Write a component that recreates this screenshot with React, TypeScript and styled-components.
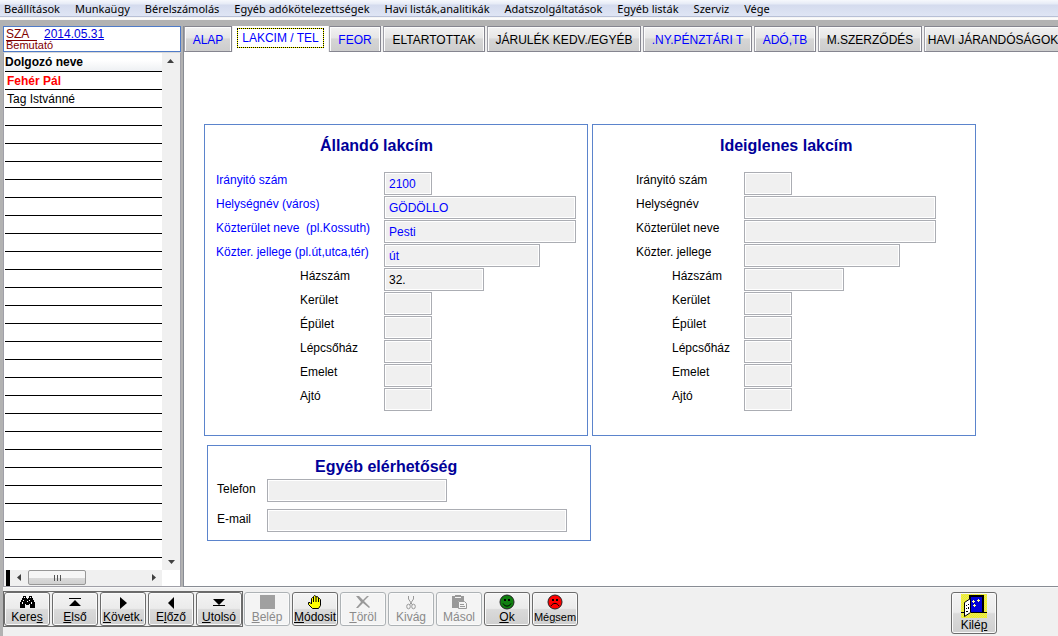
import React from 'react';
import styled, { createGlobalStyle, css } from 'styled-components';

const GlobalStyle = createGlobalStyle`
  *, *::before, *::after { box-sizing: border-box; }
  body {
    margin: 0;
    background: #f0f0f0;
    color: #000;
    font: 12px/16px "Liberation Sans", Arial, sans-serif;
    overflow-x: hidden;
  }
  button, input { font: inherit; color: inherit; margin: 0; }
`;

const Window = styled.div`
  display: flex;
  flex-direction: column;
  min-height: 100vh;
  border-left: 3px solid #b2b2b2;
`;

const MenuBar = styled.nav`
  display: flex;
  gap: 15px;
  height: 20px;
  margin-left: -3px;
  padding: 0 4px 3px;
  background: linear-gradient(#f6f8fc 0, #e6ebf6 4px, #d4dbee 5px, #dfe5f4 16px, #b8c0d6 16px, #b8c0d6 17px, #f0f0f0 17px, #fff 19px, #f0f0f0 20px);
`;

const MenuItem = styled.button`
  border: 0;
  padding: 0;
  background: none;
  font: 11px/16px "Noto Sans", "Open Sans", sans-serif;
  white-space: nowrap;
`;

const Workspace = styled.div`
  display: flex;
  gap: 2px;
  padding-top: 6px;
  background: #b2b2b2;
  border-bottom: 1px solid #f8f8f8;
`;

const Sidebar = styled.aside`
  flex: none;
  width: 178px;
  display: flex;
  flex-direction: column;
  background: #f0f0f0;
`;

const Company = styled.header`
  height: 26px;
  padding: 0 2px;
  border: 1px solid #4f7bc8;
  background: #fff;
  color: #800000;
`;

const CompanyLine = styled.div`
  display: flex;
  gap: 7px;
  line-height: 14px;
`;

const CompanyCode = styled.span`
  width: 31px;
  border-bottom: 1px solid #800000;
  height: 14px;
`;

const DateLink = styled.a`
  color: #0000e0;
`;

const CompanyName = styled.div`
  font-size: 11px;
  line-height: 9px;
`;

const ListBox = styled.div`
  flex: 1;
  display: grid;
  grid-template-columns: 158px 1fr;
  grid-template-rows: 1fr 16px;
  border: 1px solid #a0a0a8;
  border-top-color: #d8d8d8;
  background: #fff;
`;

const ListArea = styled.div`
  padding: 0 0 12px 1px;
`;

const WorkerTable = styled.table`
  width: 100%;
  border-collapse: collapse;
  th, td {
    height: 18px;
    padding: 1px 2px 0;
    text-align: left;
    line-height: 16px;
    border-bottom: 1px solid #000;
  }
  th { background: linear-gradient(#fff 40%, #eef0f3); padding: 0; }
`;

const Cell = styled.td<{ $active?: boolean }>`
  ${p => p.$active && css`color: #f00; font-weight: bold;`}
`;

const VScroll = styled.div`
  display: flex;
  flex-direction: column;
  justify-content: space-between;
  background: #f0f0f0;
`;

const HScroll = styled.div`
  display: flex;
  align-items: center;
  background: #f0f0f0;
`;

const Marker = styled.span`
  width: 4px;
  height: 16px;
  margin: 0 1px 0 2px;
  background: #000;
`;

const ScrollButton = styled.button`
  width: 17px;
  height: 16px;
  padding: 0;
  border: 0;
  background: none;
  display: grid;
  place-items: center;
  &:last-child { margin-left: auto; }
`;

const Thumb = styled.div`
  width: 58px;
  height: 15px;
  display: flex;
  justify-content: center;
  align-items: center;
  gap: 2px;
  border: 1px solid #979797;
  border-radius: 2px;
  background: linear-gradient(#f6f6f6 50%, #dadada 50%, #d0d0d0);
  i { width: 1px; height: 6px; background: #555; }
`;

const Main = styled.main`
  flex: 1;
  min-width: 0;
  display: flex;
  flex-direction: column;
  border-left: 1px solid #888c94;
  border-bottom: 1px solid #888c94;
  background: #fff;
`;

const Tabs = styled.div`
  display: flex;
  height: 26px;
  gap: 2px;
  overflow: hidden;
  background: #f0f0f0;
`;

const Tab = styled.button<{ $w: number; $blue?: boolean; $selected?: boolean }>`
  flex: none;
  width: ${p => p.$w}px;
  padding: 1px 0 0;
  white-space: nowrap;
  border: 1px solid #85858f;
  border-left-color: #a0a0a8;
  background: linear-gradient(#f2f2f2, #e6e6e6 45%, #d6d6d6 50%, #cdcdcd);
  box-shadow: inset 1px 1px #fcfcfc, inset -1px 0 #fcfcfc;
  color: ${p => (p.$blue ? '#0000ff' : '#000')};
  ${p => p.$selected && css`
    padding: 2px 4px 4px;
    border: 0;
    margin: 0 -1px;
    background: #fff;
    box-shadow: none;
  `}
`;

const Focus = styled.span`
  display: block;
  height: 20px;
  line-height: 18px;
  border: 1px dotted #000;
  background: linear-gradient(#fff, #fff) padding-box, linear-gradient(#ffff00, #ffff00) border-box;
`;

const Page = styled.div`
  flex: 1;
  padding: 72px 20px 40px;
`;

const Panels = styled.div`
  display: flex;
  flex-wrap: wrap;
  gap: 4px;
`;

const Panel = styled.form<{ $pad: number }>`
  width: 384px;
  max-width: 100%;
  padding: 10px 11px 9px ${p => p.$pad}px;
  border: 1px solid #5b84cc;
`;

const Contact = styled(Panel)`
  margin: 9px 0 0 3px;
  padding: 10px 9px 7px;
  label { padding-top: 2px; }
`;

const Title = styled.h2<{ $indent: number }>`
  margin: 0;
  padding-left: ${p => p.$indent}px;
  font-size: 16px;
  line-height: 22px;
  color: #000099;
`;

const Fields = styled.div<{ $col: number; $gap: number; $top: number }>`
  display: grid;
  grid-template-columns: ${p => p.$col}px 1fr;
  row-gap: ${p => p.$gap}px;
  padding-top: ${p => p.$top}px;
  padding-bottom: ${p => p.$top}px;
`;

const Label = styled.label<{ $indent?: number; $blue?: boolean }>`
  padding-left: ${p => p.$indent || 0}px;
  color: ${p => (p.$blue ? '#0000ff' : '#000')};
  white-space: pre;
`;

const TextBox = styled.input<{ $w: number; $blue?: boolean }>`
  width: ${p => p.$w}px;
  height: 23px;
  padding: 0 4px;
  border: 1px solid #abadb3;
  border-radius: 0;
  background: #f0f0f0;
  box-shadow: inset 0 0 0 1px #fff;
  color: ${p => (p.$blue ? '#0000ff' : '#000')};
  outline: 0;
`;

const Toolbar = styled.footer`
  flex: 1;
  display: flex;
  align-items: flex-start;
  gap: 2px;
  min-height: 48px;
  padding: 3px 61px 1px 0;
`;

const NavGroup = styled.div`
  display: flex;
  gap: 2px;
  padding: 0 1px;
  outline: 1px solid #6a6a6a;
  outline-offset: -1px;
  margin-right: -1px;
`;

const ToolButton = styled.button<{ $tall?: boolean; $small?: boolean }>`
  flex: none;
  width: 46px;
  height: ${p => (p.$tall ? 42 : 34)}px;
  margin: 1px 0;
  padding: 0;
  display: flex;
  flex-direction: column;
  align-items: center;
  overflow: hidden;
  border: 1px solid #6c6c6c;
  border-radius: 3px;
  background: linear-gradient(#f3f3f3, #ebebeb 48%, #dadada 52%, #cfcfcf);
  box-shadow: inset 0 0 0 1px #fafafa;
  font-size: ${p => (p.$small ? 11 : 12)}px;
  line-height: 14px;
  white-space: nowrap;
  svg { flex: none; margin-top: 1px; }
  &:disabled {
    color: #8a8a8a;
    border-color: #adb2b5;
    background: #f4f4f4;
  }
`;

const ExitSlot = styled.div`
  margin-left: auto;
`;

const Arrow = ({ d }: { d: string }) => (
  <svg width="7" height="7" viewBox="0 0 7 7" aria-hidden="true"><path d={d} fill="#404040" /></svg>
);

const Glyph = ({ children }: { children: React.ReactNode }) => (
  <svg width="18" height="16" viewBox="0 0 18 16" aria-hidden="true">{children}</svg>
);

const Binoculars = () => (
  <Glyph>
    <path fill="#000" d="M5 2h3v2h1v1h1V4h1V2h3v2h1v2h1v2h1v6h-5v-4h-1v1H8v-1H7v4H2V8h1V6h1V4h1z" />
    <path fill="#fff" d="M6 3h1v1H6zM5 6h1v1H5zM4 8h1v2H4zM12 3h1v1h-1zM11 6h1v1h-1zM13 8h1v2h-1zM9 7h1v1H9z" />
  </Glyph>
);
const First = () => <Glyph><path d="M3 4h12v1H3zM9 6l6 6H3z" /></Glyph>;
const Next = () => <Glyph><path d="M6 3l7 6-7 6z" /></Glyph>;
const Prev = () => <Glyph><path d="M12 3L6 9l6 6z" /></Glyph>;
const Last = () => <Glyph><path d="M3 5h12l-6 6zM3 11h12v1H3z" /></Glyph>;
const Square = () => <Glyph><path fill="#a0a0a0" d="M2 1h15v14H2z" /></Glyph>;
const Hand = () => (
  <Glyph>
    <path fill="#ffff00" stroke="#000" strokeLinejoin="round" d="M6.500 14.500L2.500 10.500V8.500H4L5.500 10V4.500L6.500 3.500 7.500 4V2.500L8.500 1.500 10 2.500V3L11 2.500 12.500 3.500V5L13.500 4.500 14.500 5.500V11.500L12.500 14.500z" />
    <path stroke="#000" fill="none" d="M7.500 4v4M10 3v5M12.500 5v3" />
  </Glyph>
);
const Cross = () => (
  <Glyph>
    <path fill="#999" d="M2 2h3l4 4 4-4h2l-5 5 6 6-1 1-6-5-5 5H2l5-6z" />
  </Glyph>
);
const Scissors = () => (
  <Glyph>
    <path fill="none" stroke="#999" d="M6.500 2v3l4 6M11.500 2v3l-4 6" />
    <ellipse cx="6.500" cy="12.500" rx="1.800" ry="2.300" fill="none" stroke="#999" />
    <ellipse cx="11.500" cy="12.500" rx="1.800" ry="2.300" fill="none" stroke="#999" />
  </Glyph>
);
const Clipboard = () => (
  <Glyph>
    <path fill="#999" d="M2 2h3V1h6v1h3v5H8v7H2z" />
    <path fill="#f4f4f4" d="M5 3h6v1H5z" />
    <path fill="#f4f4f4" stroke="#999" d="M8.500 7.500h6l2 2v5h-8z" />
    <path stroke="#999" d="M10 10.500h4M10 12.500h5" />
  </Glyph>
);
const Face = ({ fill, mouth }: { fill: string; mouth: string }) => (
  <Glyph>
    <circle cx="9" cy="8" r="7" fill={fill} stroke="#222" />
    <path d="M6 5h2v2H6zM10 5h2v2h-2z" />
    <path d={mouth} fill="none" stroke="#000" />
  </Glyph>
);
const Door = () => (
  <svg width="26" height="24" viewBox="0 0 26 24" aria-hidden="true">
    <defs>
      <pattern id="dither" width="2" height="2" patternUnits="userSpaceOnUse">
        <path fill="#d8d880" d="M0 0h2v2H0z" />
        <path fill="#ffff00" d="M0 0h1v1H0zM1 1h1v1H1z" />
      </pattern>
    </defs>
    <path fill="url(#dither)" d="M0 0h26v24H0z" />
    <path d="M0 18h4v1H0zM10 18h16v1H10zM8 1h15v18h-2V3H10v3H8z" />
    <path fill="#0000d8" d="M10 3h11v15H10z" />
    <path fill="#fff" stroke="#000" d="M3.500 8.500l6-4v14l-6 4z" />
    <path d="M5 11h1v1H5zM7 10h1v1H7zM5 14h1v1H5zM7 13h1v2H7zM5 17h2v1H5z" />
    <path stroke="#ffffa0" d="M11 7.500h3M12.500 6v3M16 6.500h3M17.500 5v3M12 11.500h3M13.500 10v3" />
  </svg>
);

const menu = ['Beállítások', 'Munkaügy', 'Bérelszámolás', 'Egyéb adókötelezettségek', 'Havi listák,analitikák', 'Adatszolgáltatások', 'Egyéb listák', 'Szerviz', 'Vége'];

const tabs = [
  { text: 'ALAP', w: 48, blue: true },
  { text: 'LAKCIM / TEL', w: 95, blue: true, selected: true },
  { text: 'FEOR', w: 52, blue: true },
  { text: 'ELTARTOTTAK', w: 102 },
  { text: 'JÁRULÉK KEDV./EGYÉB', w: 154 },
  { text: '.NY.PÉNZTÁRI T', w: 109, blue: true },
  { text: 'ADÓ,TB', w: 62, blue: true },
  { text: 'M.SZERZŐDÉS', w: 104 },
  { text: 'HAVI JÁRANDÓSÁGOK', w: 138 },
];

const workers = ['Fehér Pál', 'Tag Istvánné', ...Array<string>(25).fill('')];

type Field = { label: string; w: number; value?: string; blue?: boolean; sub?: boolean };

const details: Field[] = ['Kerület', 'Épület', 'Lépcsőház', 'Emelet', 'Ajtó'].map(label => ({ label, w: 48, sub: true }));

const permanent: Field[] = [
  { label: 'Irányitó szám', w: 48, value: '2100', blue: true },
  { label: 'Helységnév (város)', w: 192, value: 'GÖDÖLLO', blue: true },
  { label: 'Közterület neve  (pl.Kossuth)', w: 192, value: 'Pesti', blue: true },
  { label: 'Közter. jellege (pl.út,utca,tér)', w: 156, value: 'út', blue: true },
  { label: 'Házszám', w: 100, value: '32.', sub: true },
  ...details,
];

const temporary: Field[] = [
  { label: 'Irányitó szám', w: 48 },
  { label: 'Helységnév', w: 192 },
  { label: 'Közterület neve', w: 192 },
  { label: 'Közter. jellege', w: 156 },
  { label: 'Házszám', w: 100, sub: true },
  ...details,
];

const contact: Field[] = [
  { label: 'Telefon', w: 180 },
  { label: 'E-mail', w: 300 },
];

function FieldRows({ id, fields, indent = 0 }: { id: string; fields: Field[]; indent?: number }) {
  return (
    <>
      {fields.map((f, i) => (
        <React.Fragment key={f.label}>
          <Label htmlFor={`${id}-${i}`} $blue={f.blue} $indent={f.sub ? indent : 0}>{f.label}</Label>
          <TextBox id={`${id}-${i}`} $w={f.w} $blue={f.blue} defaultValue={f.value} readOnly />
        </React.Fragment>
      ))}
    </>
  );
}

export default function App() {
  return (
    <>
      <GlobalStyle />
      <Window>
        <MenuBar>
          {menu.map(m => <MenuItem key={m}>{m}</MenuItem>)}
        </MenuBar>
        <Workspace>
          <Sidebar>
            <Company>
              <CompanyLine>
                <CompanyCode>SZA</CompanyCode>
                <DateLink href="#date">2014.05.31</DateLink>
              </CompanyLine>
              <CompanyName>Bemutató</CompanyName>
            </Company>
            <ListBox>
              <ListArea>
                <WorkerTable>
                  <thead><tr><th>Dolgozó neve</th></tr></thead>
                  <tbody>
                    {workers.map((w, i) => <tr key={i}><Cell $active={i === 0}>{w}</Cell></tr>)}
                  </tbody>
                </WorkerTable>
              </ListArea>
              <VScroll>
                <ScrollButton aria-label="Fel"><Arrow d="M0 5l3.500-4L7 5z" /></ScrollButton>
                <ScrollButton aria-label="Le"><Arrow d="M0 2l3.500 4L7 2z" /></ScrollButton>
              </VScroll>
              <HScroll>
                <Marker />
                <ScrollButton aria-label="Balra"><Arrow d="M5 0L1 3.500 5 7z" /></ScrollButton>
                <Thumb><i /><i /><i /></Thumb>
                <ScrollButton aria-label="Jobbra"><Arrow d="M2 0l4 3.500L2 7z" /></ScrollButton>
              </HScroll>
            </ListBox>
          </Sidebar>
          <Main>
            <Tabs role="tablist">
              {tabs.map(t => (
                <Tab key={t.text} role="tab" aria-selected={!!t.selected} $w={t.w} $blue={t.blue} $selected={t.selected}>
                  {t.selected ? <Focus>{t.text}</Focus> : t.text}
                </Tab>
              ))}
            </Tabs>
            <Page>
              <Panels>
                <Panel $pad={11}>
                  <Title $indent={104}>Állandó lakcím</Title>
                  <Fields $col={168} $gap={1} $top={15}>
                    <FieldRows id="permanent" fields={permanent} indent={84} />
                  </Fields>
                </Panel>
                <Panel $pad={43}>
                  <Title $indent={84}>Ideiglenes lakcím</Title>
                  <Fields $col={108} $gap={1} $top={15}>
                    <FieldRows id="temporary" fields={temporary} indent={36} />
                  </Fields>
                </Panel>
              </Panels>
              <Contact $pad={9}>
                <Title $indent={98}>Egyéb elérhetőség</Title>
                <Fields $col={50} $gap={7} $top={1}>
                  <FieldRows id="contact" fields={contact} />
                </Fields>
              </Contact>
            </Page>
          </Main>
        </Workspace>
        <Toolbar>
          <NavGroup>
            <ToolButton><Binoculars /><span>Kere<u>s</u></span></ToolButton>
            <ToolButton><First /><span><u>E</u>lső</span></ToolButton>
            <ToolButton><Next /><span><u>K</u>övetk.</span></ToolButton>
            <ToolButton><Prev /><span>E<u>l</u>őző</span></ToolButton>
            <ToolButton><Last /><span><u>U</u>tolsó</span></ToolButton>
          </NavGroup>
          <ToolButton disabled><Square /><span><u>B</u>elép</span></ToolButton>
          <ToolButton><Hand /><span><u>M</u>ódosit</span></ToolButton>
          <ToolButton disabled><Cross /><span><u>T</u>öröl</span></ToolButton>
          <ToolButton disabled><Scissors /><span>Kivág</span></ToolButton>
          <ToolButton disabled><Clipboard /><span>Másol</span></ToolButton>
          <ToolButton><Face fill="#108010" mouth="M5 9.500c2 3.500 6 3.500 8 0" /><span><u>O</u>k</span></ToolButton>
          <ToolButton $small><Face fill="#ff0000" mouth="M5 12c2-3.500 6-3.500 8 0" /><span>Mé<u>g</u>sem</span></ToolButton>
          <ExitSlot>
            <ToolButton $tall><Door /><span>Kilé<u>p</u></span></ToolButton>
          </ExitSlot>
        </Toolbar>
      </Window>
    </>
  );
}
